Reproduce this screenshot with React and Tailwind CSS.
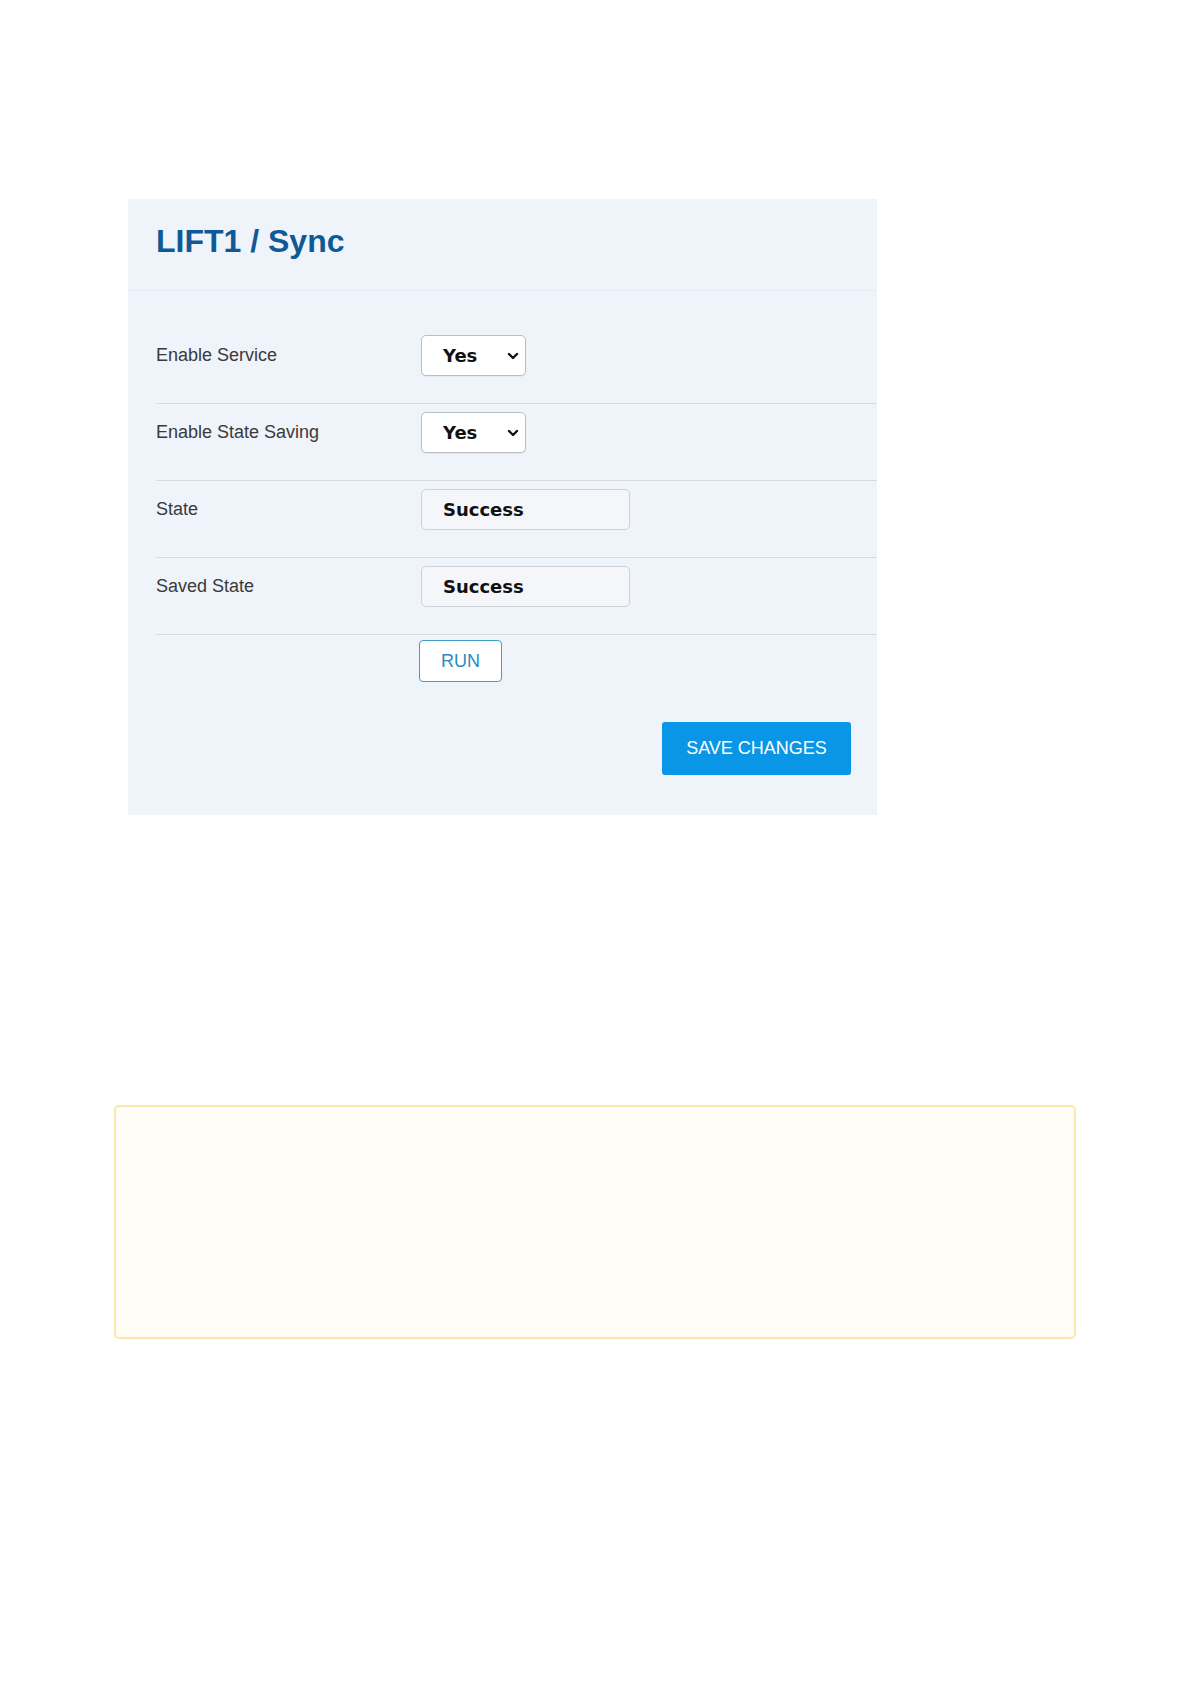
import React from 'react';

const rows = [
  { label: 'Enable Service', kind: 'select', value: 'Yes' },
  { label: 'Enable State Saving', kind: 'select', value: 'Yes' },
  { label: 'State', kind: 'status', value: 'Success' },
  { label: 'Saved State', kind: 'status', value: 'Success' },
];

const SelectBox = ({ value }) => (
  <div className="flex items-center justify-between w-[105px] h-[41px] pl-[21px] pr-[6px] bg-white border border-[#b9bdc5] rounded-[5px] shadow-[0_1px_1px_rgba(0,0,0,0.05)] font-['DejaVu_Sans',sans-serif] font-bold text-[18px] text-[#111]">
    <span>{value}</span>
    <svg width="12" height="8" viewBox="0 0 12 8" fill="none">
      <path d="M2 2 L6 6 L10 2" stroke="#111" strokeWidth="2.4" strokeLinecap="round" strokeLinejoin="round" />
    </svg>
  </div>
);

const StatusBox = ({ value }) => (
  <div className="flex items-center w-[209px] h-[41px] pl-[21px] bg-[#f4f6fa] border border-[#cdd1d8] rounded-[5px] font-['DejaVu_Sans',sans-serif] font-bold text-[18px] text-[#111]">
    {value}
  </div>
);

export default function App() {
  return (
    <div className="min-h-[1684px] bg-white font-['Liberation_Sans',Arial,sans-serif] pt-[199px]">
      {/* Settings panel */}
      <div className="ml-[128px] w-[749px] bg-[#eff3fa]">
        <div className="h-[92px] pl-[28px] pt-[24px] border-b border-[#e7ebf3]">
          <h2 className="text-[32px] leading-[36px] font-bold text-[#0f5a96]">LIFT1 / Sync</h2>
        </div>

        <div className="pl-[28px] pt-[36px]">
          {rows.map((r) => (
            <div key={r.label} className="flex items-start pt-[8px] pb-[27px] border-b border-[#d6dae1]">
              <div className="w-[265px] h-[41px] flex items-center text-[18px] text-[#3a3a3a]">{r.label}</div>
              {r.kind === 'select' ? <SelectBox value={r.value} /> : <StatusBox value={r.value} />}
            </div>
          ))}

          <div className="pl-[263px] pt-[5px]">
            <button className="w-[83px] h-[42px] bg-white border border-[#3d9ec6] rounded-[4px] text-[18px] text-[#2a8bbf]">
              RUN
            </button>
          </div>

          <div className="flex justify-end pr-[26px] pt-[40px] pb-[40px]">
            <button className="w-[189px] h-[53px] bg-[#0a96e6] rounded-[3px] text-[18px] text-white">
              SAVE CHANGES
            </button>
          </div>
        </div>
      </div>

      {/* Notice box */}
      <div className="mt-[290px] ml-[114px] w-[962px] h-[234px] bg-[#fffdf6] border-2 border-[#fbe7aa] rounded-[5px]" />
    </div>
  );
}
